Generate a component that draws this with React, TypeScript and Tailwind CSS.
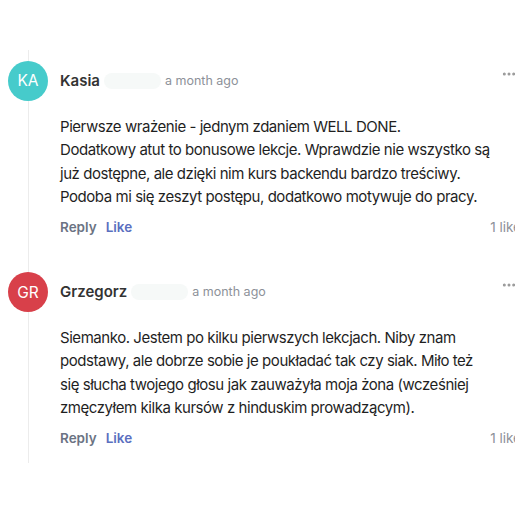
import { MoreHorizontal } from "lucide-react";

type Comment = {
  initials: string;
  color: string;
  name: string;
  lines: string[];
};

const comments: Comment[] = [
  {
    initials: "KA",
    color: "bg-[#46cbcb]",
    name: "Kasia",
    lines: [
      "Pierwsze wrażenie - jednym zdaniem WELL DONE.",
      "Dodatkowy atut to bonusowe lekcje. Wprawdzie nie wszystko są",
      "już dostępne, ale dzięki nim kurs backendu bardzo treściwy.",
      "Podoba mi się zeszyt postępu, dodatkowo motywuje do pracy.",
    ],
  },
  {
    initials: "GR",
    color: "bg-[#d8404a]",
    name: "Grzegorz",
    lines: [
      "Siemanko. Jestem po kilku pierwszych lekcjach. Niby znam",
      "podstawy, ale dobrze sobie je poukładać tak czy siak. Miło też",
      "się słucha twojego głosu jak zauważyła moja żona (wcześniej",
      "zmęczyłem kilka kursów z hinduskim prowadzącym).",
    ],
  },
];

function CommentItem({ c, first }: { c: Comment; first: boolean }) {
  return (
    <div className={first ? "pt-[11px]" : "pt-[33px]"}>
      {/* Header */}
      <div className="flex items-center h-10 -ml-[21px]">
        <div
          className={`${c.color} w-10 h-10 rounded-full flex items-center justify-center text-white text-[15.5px] shrink-0`}
        >
          {c.initials}
        </div>
        <span className="ml-3 text-[15px] font-semibold text-[#333]">{c.name}</span>
        <span className="w-[57px] h-4 mx-1 rounded-full bg-[#f6f9f8]" />
        <span className="text-[12.5px] text-[#8d9199]">a month ago</span>
        <div className="flex-1" />
        <MoreHorizontal className="w-4 h-4 text-[#999] -mt-[14px] -mr-[2px]" strokeWidth={2.5} />
      </div>

      {/* Body */}
      <div className="pl-[31px] mt-[14px] text-[15px] tracking-[-0.45px] leading-[23.3px] text-[#1f1f1f] whitespace-nowrap">
        {c.lines.map((l) => (
          <div key={l}>{l}</div>
        ))}
      </div>

      {/* Actions */}
      <div className="pl-[31px] mt-[7px] flex items-center h-6 text-[13.5px] font-semibold">
        <span className="text-[#6b7383]">Reply</span>
        <span className="ml-[9px] text-[#5a6fc0]">Like</span>
        <div className="flex-1" />
        <span className="font-normal text-[#8d9199] whitespace-nowrap -mr-[6px]">1 like</span>
      </div>
    </div>
  );
}

export default function App() {
  return (
    <div
      className="w-[515px] h-[515px] bg-white overflow-hidden"
      style={{ fontFamily: "Inter, 'Liberation Sans', sans-serif" }}
    >
      <div className="ml-[28px] mt-[50px] h-[413px] border-l-[1.5px] border-[#ececec] w-[487px]">
        {comments.map((c, i) => (
          <CommentItem key={c.name} c={c} first={i === 0} />
        ))}
      </div>
    </div>
  );
}
